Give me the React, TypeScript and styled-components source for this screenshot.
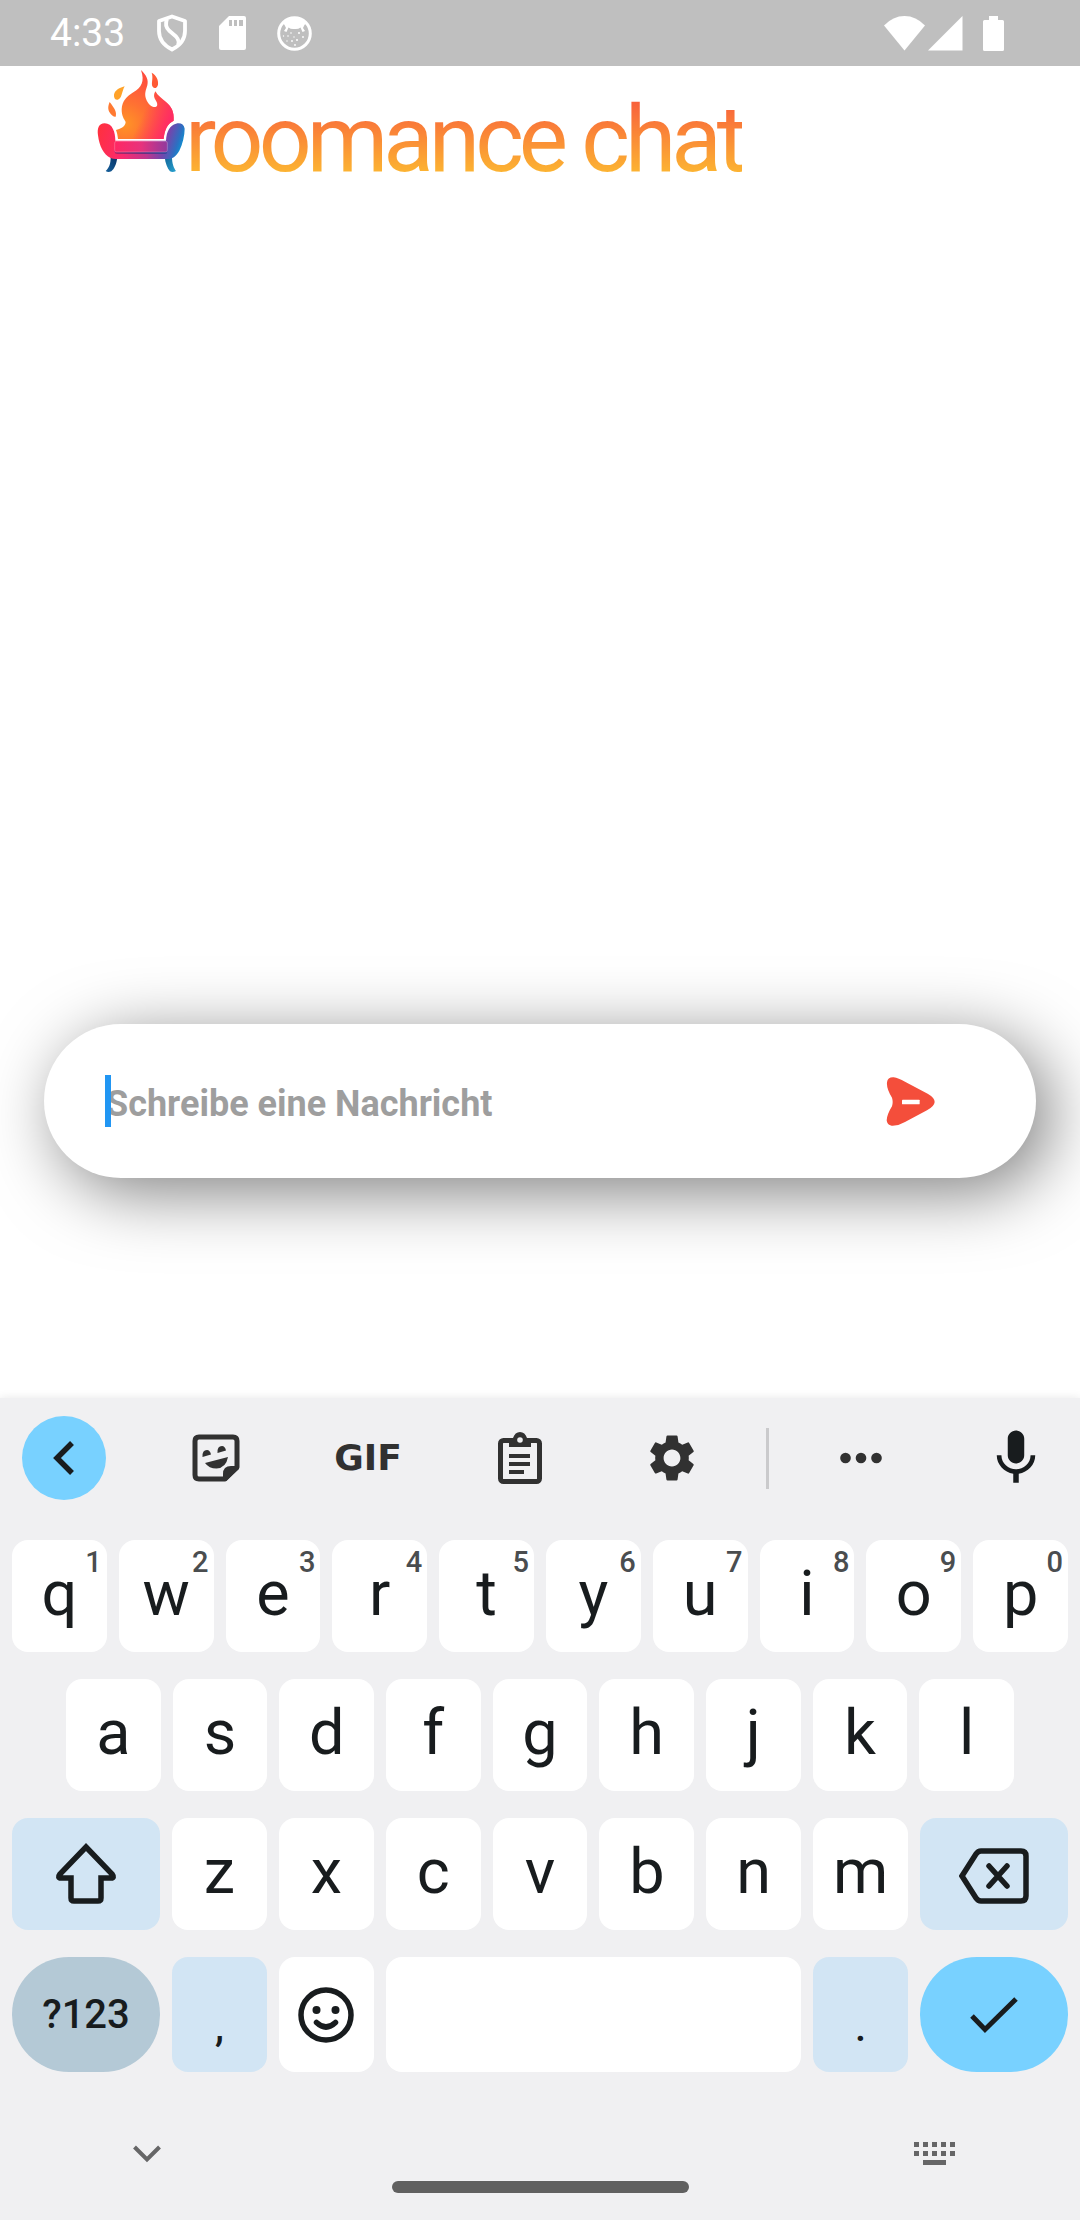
import React from "react";
import styled, { createGlobalStyle, css } from "styled-components";
import { MdMic, MdSettings } from "react-icons/md";

const GlobalStyle = createGlobalStyle`
  *, *::before, *::after { box-sizing: border-box; }
  body {
    margin: 0;
    background: #ffffff;
    font-family: Roboto, "Noto Sans", sans-serif;
  }
  button, input { font-family: inherit; }
  svg { display: block; flex: none; }
`;

const ink = "#181c1e";
const toolInk = "#313131";

const Screen = styled.div`
  display: flex;
  flex-direction: column;
  min-height: 100vh;
`;

const StatusBar = styled.header`
  display: flex;
  align-items: center;
  justify-content: space-between;
  height: 66px;
  padding: 0 76px 0 50px;
  background: #bfbfbf;
  color: #ffffff;
`;

const StatusGroup = styled.div<{ $gap: number }>`
  display: flex;
  align-items: center;
  gap: ${(p) => p.$gap}px;
`;

const Clock = styled.time`
  font-size: 39px;
  line-height: 48px;
`;

const Brand = styled.div`
  display: flex;
  align-items: flex-end;
  padding: 4px 97px 0;
`;

const Wordmark = styled.h1`
  margin: 0;
  padding-top: 8px;
  font-size: 93px;
  font-weight: 400;
  line-height: 64px;
  letter-spacing: -5px;
  white-space: nowrap;
  color: transparent;
  background: linear-gradient(#f85f3c, #fcb332);
  background-clip: text;
  -webkit-background-clip: text;
`;

const Chat = styled.main`
  display: flex;
  flex: 1;
  flex-direction: column;
  justify-content: flex-end;
  padding: 0 44px 220px;
`;

const Composer = styled.form`
  display: flex;
  align-items: center;
  height: 154px;
  padding: 0 84px 0 62px;
  border-radius: 77px;
  background: #ffffff;
  box-shadow: 14px 14px 68px rgba(0, 0, 0, 0.5);
`;

const Field = styled.label`
  position: relative;
  display: flex;
  flex: 1;
`;

const MessageInput = styled.input`
  width: 100%;
  height: 52px;
  padding: 6px 0 0;
  border: 0;
  outline: 0;
  background: none;
  font-size: 36px;
  font-weight: 700;
  color: #212121;
  caret-color: transparent;
  &::placeholder { color: #9e9e9e; opacity: 1; }
`;

const Caret = styled.span`
  position: absolute;
  top: 0;
  left: -1px;
  width: 6px;
  height: 52px;
  background: #2196f3;
`;

const IconButton = styled.button<{ $filled?: boolean }>`
  display: flex;
  flex: none;
  align-items: center;
  justify-content: center;
  width: 84px;
  height: 84px;
  padding: 0;
  border: 0;
  border-radius: 42px;
  background: ${(p) => (p.$filled ? "#78d1ff" : "transparent")};
  color: ${toolInk};
`;

const Keyboard = styled.section`
  background: #f0f0f2;
  box-shadow: 0 -1px 8px rgba(0, 0, 0, 0.08);
`;

const Toolbar = styled.div`
  display: flex;
  align-items: center;
  height: 120px;
  padding: 0 22px;
`;

const Tools = styled.div`
  display: flex;
  gap: 68px;
`;

const GifLabel = styled.span`
  font-family: "DejaVu Sans", sans-serif;
  font-size: 36px;
  font-weight: 700;
  line-height: 40px;
`;

const Divider = styled.span`
  width: 3px;
  height: 61px;
  margin: 0 50px 0 52px;
  background: #cacacc;
`;

const MicButton = styled(IconButton)`
  margin-left: auto;
  color: ${ink};
`;

const Rows = styled.div`
  display: flex;
  flex-direction: column;
  gap: 27px;
  padding: 22px 12px 0;
`;

const Row = styled.div<{ $kind: "letters" | "inset" | "edges"; $tall?: boolean }>`
  display: grid;
  gap: 12px;
  height: ${(p) => (p.$tall ? 115 : 112)}px;
  ${(p) =>
    p.$kind === "edges"
      ? css`grid-template-columns: 148px repeat(7, 1fr) 148px;`
      : css`grid-auto-flow: column; grid-auto-columns: 1fr;`}
  ${(p) => p.$kind === "inset" && css`padding: 0 54px;`}
`;

const tones = {
  plain: "#ffffff",
  soft: "#d2e5f4",
  muted: "#b4c9d6",
  accent: "#78d1ff",
};

const KeyCap = styled.button<{ $tone?: keyof typeof tones; $pill?: boolean; $span?: number }>`
  position: relative;
  display: flex;
  align-items: center;
  justify-content: center;
  min-width: 0;
  padding: 0;
  border: 0;
  border-radius: ${(p) => (p.$pill ? 57 : 16)}px;
  background: ${(p) => tones[p.$tone ?? "plain"]};
  color: ${ink};
  ${(p) => p.$span && css`grid-column: span ${p.$span};`}
`;

const LetterKey = styled(KeyCap)`
  padding-bottom: 4px;
  font-size: 63px;
  line-height: 72px;
`;

const Hint = styled.span`
  position: absolute;
  top: 7px;
  right: 5px;
  color: #4a4d4f;
  font-size: 29px;
  font-weight: 500;
  line-height: 30px;
`;

const SmallKey = styled(KeyCap)`
  font-size: 40px;
  font-weight: 500;
  line-height: 48px;
`;

const PunctuationKey = styled(SmallKey)`
  padding-top: 26px;
`;

const NavRow = styled.div`
  display: flex;
  align-items: center;
  justify-content: space-between;
  padding: 58px 103px 3px 105px;
`;

const NavButton = styled(IconButton)`
  height: 48px;
  color: #666667;
`;

const HomeBar = styled.div`
  width: 297px;
  height: 12px;
  margin: 0 auto;
  border-radius: 6px;
  background: #606060;
`;

const HomeArea = styled.div`
  padding-bottom: 27px;
`;

const ShieldIcon = () => (
  <svg width="32" height="38" viewBox="0 0 32 38" fill="none" stroke="currentColor" strokeWidth="3.800" strokeLinejoin="round">
    <path d="M16 2.500 L29 7 V17 C29 26 24 31.500 16 35.500 C8 31.500 3 26 3 17 V7Z" />
    <path d="M11 5 C9 10 10 13.500 13 16.500 L20 22.500 C23 26 23.500 28 22 31" />
  </svg>
);

const SdIcon = () => (
  <svg width="27" height="34" viewBox="0 0 27 34">
    <path fill="currentColor" d="M10 0 H25 Q27 0 27 2 V32 Q27 34 25 34 H2 Q0 34 0 32 V10Z" />
    <path fill="#bfbfbf" d="M10 4h3v6h-3zM15 4h3v6h-3zM20 4h4v6h-4z" />
  </svg>
);

const CookieIcon = () => (
  <svg width="35" height="35" viewBox="0 0 35 35">
    <circle cx="17.500" cy="17.500" r="15.800" fill="none" stroke="currentColor" strokeWidth="3" />
    <path fill="currentColor" d="M6 7 Q17 -3 29 7 Q27 9 26 12 L28 15 L25.500 16 L23.500 11.500 Q21 13.500 17.500 13 Q14 13.500 11.500 11.500 L9.500 16 L7 15 L9 12 Q8 9 6 7Z" />
    <g fill="currentColor">
      <circle cx="14" cy="17" r="0.800" /><circle cx="22" cy="17" r="1" />
      <circle cx="6.500" cy="20" r="0.700" /><circle cx="11" cy="20" r="0.800" />
      <circle cx="17" cy="21" r="0.700" /><circle cx="26" cy="21" r="0.900" />
      <circle cx="20" cy="24" r="1" /><circle cx="10" cy="25" r="0.700" />
      <circle cx="15" cy="25" r="0.900" /><circle cx="18" cy="29" r="0.900" />
    </g>
  </svg>
);

const WifiIcon = () => (
  <svg width="41" height="35" viewBox="0 0 41 35">
    <path fill="currentColor" d="M0 9.500 Q9 0 20.500 0 Q32 0 41 9.500 L20.500 34.500Z" />
  </svg>
);

const SignalIcon = () => (
  <svg width="35" height="35" viewBox="0 0 35 35">
    <path fill="currentColor" d="M0 34.500 L34.500 0 V34.500Z" />
  </svg>
);

const BatteryIcon = () => (
  <svg width="21" height="35" viewBox="0 0 21 35">
    <path fill="currentColor" d="M6 0h9v4h4.500q1.500 0 1.500 1.500v28q0 1.500-1.500 1.500h-18Q0 35 0 33.500v-28Q0 4 1.500 4H6z" />
  </svg>
);

const sofaShape =
  "M74 190 C56 190 51 206 54 226 C58 258 70 284 92 294 Q98 297 108 297 H262 C276 297 288 290 298 272 C308 252 314 226 314 206 C312 192 300 187 288 191 C270 196 260 212 258 242 H106 C106 218 98 190 74 190Z";

const SofaLogo = () => (
  <svg width="88" height="102" viewBox="51 30 264 306" role="img" aria-label="roomance">
    <defs>
      <radialGradient id="flame" gradientUnits="userSpaceOnUse" cx="136" cy="192" r="160">
        <stop offset="0" stopColor="#ff9426" />
        <stop offset="0.400" stopColor="#ff7232" />
        <stop offset="0.750" stopColor="#ff5a3c" />
        <stop offset="1" stopColor="#ff4a3c" />
      </radialGradient>
      <linearGradient id="flameEdge" gradientUnits="userSpaceOnUse" x1="180" y1="180" x2="254" y2="214">
        <stop offset="0" stopColor="#ff2a66" stopOpacity="0" />
        <stop offset="1" stopColor="#ff2868" stopOpacity="0.900" />
      </linearGradient>
      <linearGradient id="sofa" gradientUnits="userSpaceOnUse" x1="62" y1="195" x2="304" y2="272">
        <stop offset="0" stopColor="#ff3040" />
        <stop offset="0.350" stopColor="#fb2a6e" />
        <stop offset="0.620" stopColor="#c2358c" />
        <stop offset="0.800" stopColor="#7545ac" />
        <stop offset="0.930" stopColor="#2c70c2" />
        <stop offset="1" stopColor="#0c94d2" />
      </linearGradient>
      <linearGradient id="cushion" x1="0" x2="1">
        <stop offset="0" stopColor="#ff2863" />
        <stop offset="0.500" stopColor="#e8327c" />
        <stop offset="1" stopColor="#913a9e" />
      </linearGradient>
      <linearGradient id="seatShade" x1="0" x2="1">
        <stop offset="0" stopColor="#b02465" />
        <stop offset="0.550" stopColor="#66307f" />
        <stop offset="1" stopColor="#31479f" />
      </linearGradient>
      <linearGradient id="legLeft" x1="1" y1="0" x2="0" y2="1">
        <stop offset="0" stopColor="#073266" />
        <stop offset="1" stopColor="#17629d" />
      </linearGradient>
      <linearGradient id="legRight" x1="0" y1="0" x2="1" y2="1">
        <stop offset="0" stopColor="#116398" />
        <stop offset="1" stopColor="#29a3d0" />
      </linearGradient>
    </defs>
    <path fill="url(#flame)" d="M183 30 C200 46 206 60 202 76 C197 92 193 102 198 116 C203 131 215 142 226 141 C234 139 233 130 228 122 C221 112 220 104 226 94 C234 108 246 116 258 126 C274 139 283 155 281 182 C264 190 254 206 251 237 H114 C113 226 111 218 108 210 C120 206 136 202 137 186 C132 176 125 170 125 148 C126 122 142 108 160 97 C184 82 195 66 183 30Z" />
    <path fill="url(#flameEdge)" d="M226 94 C234 108 246 116 258 126 C274 139 283 155 281 182 C264 190 254 206 251 237 H150 L190 140 L226 141 C234 139 233 130 228 122 C221 112 220 104 226 94Z" />
    <path fill="#ff5a35" d="M215 38 C229 46 236 60 234 74 C231 85 223 87 218 80 C212 70 221 56 215 38Z" />
    <path fill="#ffa229" d="M134 79 C116 84 104 92 102 104 C101 114 106 120 113 119 C126 117 124 98 134 79Z" />
    <path fill="#ff7a32" d="M89 126 C86 134 82 144 88 156 C94 166 103 172 107 170 C111 156 104 146 89 126Z" />
    <path d={sofaShape} fill="#ffffff" stroke="#ffffff" strokeWidth="10" />
    <path fill="url(#legLeft)" d="M92 290 H112 C110 314 102 326 94 334 Q84 338 77 333 C88 322 92 312 92 290Z" />
    <path fill="url(#legRight)" d="M254 290 H276 C276 312 282 324 288 333 Q278 338 270 334 C262 324 256 310 254 290Z" />
    <path d={sofaShape} fill="url(#sofa)" />
    <rect x="104" y="262" width="158" height="20" rx="7" fill="url(#seatShade)" />
    <rect x="104" y="244" width="158" height="32" rx="5" fill="url(#cushion)" stroke="#ffffff" strokeOpacity="0.350" strokeWidth="2" />
  </svg>
);

const SendIcon = () => (
  <svg width="49" height="49" viewBox="315 350 147 147">
    <path fill="#f44e3b" d="M318 366 Q320 350 338 351 Q352 353 372 364 L440 400 Q461 412 461 425 Q460 438 438 450 L372 485 Q352 497 332 496 Q318 495 317 480 Q318 462 333 438 Q337 425 333 412 Q316 384 318 366Z" />
    <rect x="363" y="418" width="53" height="14" rx="2" fill="#ffffff" />
  </svg>
);

const BackIcon = () => (
  <svg width="34" height="34" viewBox="0 0 34 34" fill="none" stroke={ink} strokeWidth="5.500">
    <path d="M25 2 L10 17 L25 32" />
  </svg>
);

const StickerIcon = () => (
  <svg width="48" height="48" viewBox="0 0 48 48">
    <path fill="none" stroke="currentColor" strokeWidth="5" strokeLinejoin="round" d="M7 3 H41 Q45 3 45 7 V33 L33 45 H7 Q3 45 3 41 V7 Q3 3 7 3Z" />
    <path fill="currentColor" d="M47 32 H39 Q31 32 31 40 V47 L34 47 L47 35Z" />
    <path fill="currentColor" d="M13 29 L36 23 Q34 34 24.500 34.500 Q17 34.500 13 29Z M10.500 23 Q10 16 15 16 Q18 16 19 20.500Z M25.500 19 Q25 12 30 12 Q33 12 34 16.500Z" />
  </svg>
);

const ClipboardIcon = () => (
  <svg width="44" height="52" viewBox="0 0 44 52">
    <rect x="2.500" y="8.500" width="39" height="41" rx="3" fill="none" stroke="currentColor" strokeWidth="5" />
    <path fill="currentColor" d="M11 6 H15 Q17 0 22 0 Q27 0 29 6 H33 V15 H11Z" />
    <circle cx="22" cy="8" r="2.800" fill="#f0f0f2" />
    <path fill="currentColor" d="M11 22h21v4H11zM11 30h21v4H11zM11 38h15v4H11z" />
  </svg>
);

const MoreIcon = () => (
  <svg width="42" height="12" viewBox="0 0 42 12" fill="currentColor">
    <circle cx="5.500" cy="6" r="5.300" />
    <circle cx="21" cy="6" r="5.300" />
    <circle cx="36.500" cy="6" r="5.300" />
  </svg>
);

const ShiftIcon = () => (
  <svg width="62" height="62" viewBox="0 0 62 62" fill="none" stroke="currentColor" strokeWidth="5.500">
    <path d="M31 4 L57 31 Q60 35 56 35 H46 V55 Q46 58 43 58 H19 Q16 58 16 55 V35 H6 Q2 35 5 31Z" />
  </svg>
);

const BackspaceIcon = () => (
  <svg width="70" height="60" viewBox="0 0 70 60" fill="none" stroke="currentColor" strokeWidth="5.500">
    <path d="M22 7 H62 Q67 7 67 12 V52 Q67 57 62 57 H22 Q19 57 17 54 L3 32 L17 10 Q19 7 22 7Z" />
    <path strokeLinecap="round" d="M30 22 L48 42 M48 22 L30 42" />
  </svg>
);

const SmileIcon = () => (
  <svg width="56" height="56" viewBox="0 0 56 56">
    <g fill="none" stroke="currentColor" strokeWidth="5.500">
      <circle cx="28" cy="28" r="25" />
      <path strokeLinecap="round" d="M18.500 35.500 Q28 44.500 37.500 35.500" />
    </g>
    <circle cx="18.500" cy="23" r="4" fill="currentColor" />
    <circle cx="37.500" cy="23" r="4" fill="currentColor" />
  </svg>
);

const CheckIcon = () => (
  <svg width="48" height="38" viewBox="0 0 48 38" fill="none" stroke="currentColor" strokeWidth="5">
    <path d="M2 20 L15 33.500 L46 3" />
  </svg>
);

const HideIcon = () => (
  <svg width="28" height="18" viewBox="0 0 28 18" fill="none" stroke="currentColor" strokeWidth="4">
    <path d="M1.500 2 L14 14.500 L26.500 2" />
  </svg>
);

const KeyboardIcon = () => (
  <svg width="42" height="24" viewBox="0 0 42 24" fill="currentColor">
    {[0, 9, 18, 27, 36].map((x) => (
      <path key={x} d={`M${x} 0h5v5h-5zM${x} 9h5v5h-5z`} />
    ))}
    <path d="M9 18h23v5H9z" />
  </svg>
);

type KeySpec = { letter: string; hint?: string };

const topRow: KeySpec[] = [..."qwertyuiop"].map((letter, i) => ({ letter, hint: String((i + 1) % 10) }));
const homeRow: KeySpec[] = [..."asdfghjkl"].map((letter) => ({ letter }));
const bottomRow: KeySpec[] = [..."zxcvbnm"].map((letter) => ({ letter }));

const LetterKeys = ({ keys }: { keys: KeySpec[] }) => (
  <>
    {keys.map(({ letter, hint }) => (
      <LetterKey key={letter} type="button">
        {letter}
        {hint && <Hint>{hint}</Hint>}
      </LetterKey>
    ))}
  </>
);

export default function App() {
  return (
    <Screen>
      <GlobalStyle />
      <StatusBar>
        <StatusGroup $gap={31}>
          <Clock>4:33</Clock>
          <ShieldIcon />
          <SdIcon />
          <CookieIcon />
        </StatusGroup>
        <StatusGroup $gap={20}>
          <StatusGroup $gap={3}>
            <WifiIcon />
            <SignalIcon />
          </StatusGroup>
          <BatteryIcon />
        </StatusGroup>
      </StatusBar>

      <Brand>
        <SofaLogo />
        <Wordmark>roomance chat</Wordmark>
      </Brand>

      <Chat>
        <Composer onSubmit={(e) => e.preventDefault()}>
          <Field>
            <MessageInput type="text" aria-label="Schreibe eine Nachricht" placeholder="Schreibe eine Nachricht" />
            <Caret />
          </Field>
          <IconButton type="submit" aria-label="Senden">
            <SendIcon />
          </IconButton>
        </Composer>
      </Chat>

      <Keyboard aria-label="Tastatur">
        <Toolbar>
          <Tools>
            <IconButton type="button" $filled aria-label="Zurück"><BackIcon /></IconButton>
            <IconButton type="button" aria-label="Sticker"><StickerIcon /></IconButton>
            <IconButton type="button"><GifLabel>GIF</GifLabel></IconButton>
            <IconButton type="button" aria-label="Zwischenablage"><ClipboardIcon /></IconButton>
            <IconButton type="button" aria-label="Einstellungen"><MdSettings size={56} /></IconButton>
          </Tools>
          <Divider />
          <IconButton type="button" aria-label="Mehr"><MoreIcon /></IconButton>
          <MicButton type="button" aria-label="Spracheingabe"><MdMic size={66} /></MicButton>
        </Toolbar>

        <Rows>
          <Row $kind="letters">
            <LetterKeys keys={topRow} />
          </Row>
          <Row $kind="inset">
            <LetterKeys keys={homeRow} />
          </Row>
          <Row $kind="edges">
            <KeyCap type="button" $tone="soft" aria-label="Umschalt"><ShiftIcon /></KeyCap>
            <LetterKeys keys={bottomRow} />
            <KeyCap type="button" $tone="soft" aria-label="Löschen"><BackspaceIcon /></KeyCap>
          </Row>
          <Row $kind="edges" $tall>
            <SmallKey type="button" $tone="muted" $pill>?123</SmallKey>
            <PunctuationKey type="button" $tone="soft">,</PunctuationKey>
            <KeyCap type="button" aria-label="Emoji"><SmileIcon /></KeyCap>
            <KeyCap type="button" $span={4} aria-label="Leertaste" />
            <PunctuationKey type="button" $tone="soft">.</PunctuationKey>
            <KeyCap type="button" $tone="accent" $pill aria-label="Fertig"><CheckIcon /></KeyCap>
          </Row>
        </Rows>

        <HomeArea>
          <NavRow>
            <NavButton type="button" aria-label="Tastatur ausblenden"><HideIcon /></NavButton>
            <NavButton type="button" aria-label="Tastatur wechseln"><KeyboardIcon /></NavButton>
          </NavRow>
          <HomeBar />
        </HomeArea>
      </Keyboard>
    </Screen>
  );
}
